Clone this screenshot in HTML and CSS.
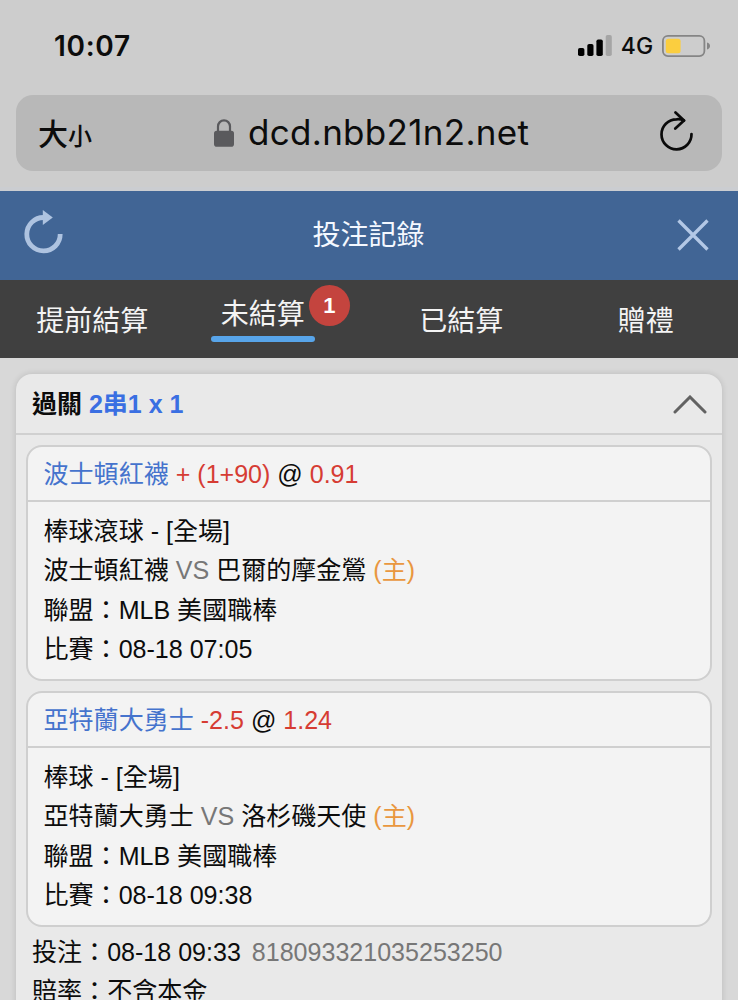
FILE: index.html
```html
<!DOCTYPE html>
<html lang="zh-Hant">
<head>
  <meta charset="UTF-8">
  <title>投注記錄</title>
  <link rel="stylesheet" href="styles.css">
</head>
<body>

<div class="browser">
  <div class="status-bar">
    <span class="time">10:07</span>
    <div class="status-icons">
      <svg width="34" height="22" viewBox="0 0 34 22">
        <rect x="0" y="13" width="6.4" height="8" rx="1.8"/>
        <rect x="9.3" y="9" width="6.2" height="12" rx="1.8"/>
        <rect x="18.4" y="4.5" width="6.4" height="16.5" rx="1.8"/>
        <rect x="27.7" y="0" width="6.1" height="21" rx="1.8" fill="#a5a5a5"/>
      </svg>
      <span class="network">4G</span>
      <svg width="49" height="22" viewBox="0 0 49 22">
        <rect x="0.9" y="0.9" width="41.5" height="20.2" rx="5" fill="none" stroke="#858585" stroke-width="1.8"/>
        <rect x="3.8" y="3.8" width="14.8" height="14.4" rx="2.5" fill="#fbce3f"/>
        <path d="M45 7.5c2 .6 3 1.9 3 3.5s-1 2.9-3 3.5z" fill="#858585"/>
      </svg>
    </div>
  </div>
  <div class="address-bar">
    <div class="text-size"><span class="big">大</span><span class="small">小</span></div>
    <div class="url">
      <svg width="20" height="28" viewBox="0 0 20 28">
        <path d="M4 13V7.5a6 6.2 0 0 1 12 0V13" fill="none" stroke="#5a5a5d" stroke-width="2.2"/>
        <rect x="0" y="11.7" width="20" height="16" rx="2.8" fill="#5a5a5d"/>
      </svg>
      <span>dcd.nbb21n2.net</span>
    </div>
    <svg class="reload" width="34" height="40" viewBox="0 0 34 40" fill="none" stroke="#0a0a0a" stroke-width="2.7" stroke-linecap="round" stroke-linejoin="round">
      <path d="M31.5 23A15 15 0 1 1 16.5 8.3Q20 7.8 24 9.5"/>
      <path d="M15.5 1.500l8.500 8-8.700 8"/>
    </svg>
  </div>
</div>

<div class="page-header">
  <svg class="refresh" width="40" height="44" viewBox="0 0 40 44">
    <path d="M36.2 24A16.7 16.7 0 1 1 20 7.500" fill="none" stroke="#aec3e0" stroke-width="4.8"/>
    <path d="M18.8 0v15l10-7.500z" fill="#aec3e0"/>
  </svg>
  <h1>投注記錄</h1>
  <svg width="34" height="34" viewBox="0 0 34 34">
    <path d="M2.5 2.5l29 29M31.5 2.5l-29 29" stroke="#b3c8e6" stroke-width="3.300"/>
  </svg>
</div>

<div class="tabs">
  <div class="tab">提前結算</div>
  <div class="tab active"><span class="tab-label">未結算<span class="badge">1</span></span></div>
  <div class="tab">已結算</div>
  <div class="tab">贈禮</div>
</div>

<div class="card">
  <div class="card-header">
    <span>過關 <span class="combo">2串1 x 1</span></span>
    <svg width="34" height="20" viewBox="0 0 34 20">
      <path d="M2 17L17 2l15 15" fill="none" stroke="#626262" stroke-width="3" stroke-linecap="round"/>
    </svg>
  </div>

  <div class="bets">
    <div class="bet">
      <div class="bet-title"><span class="team">波士頓紅襪</span> <span class="odds">+ (1+90)</span> @ <span class="odds">0.91</span></div>
      <div class="bet-body">
        <div>棒球滾球 - [全場]</div>
        <div>波士頓紅襪 <span class="vs">VS</span> 巴爾的摩金鶯 <span class="home">(主)</span></div>
        <div>聯盟：MLB 美國職棒</div>
        <div>比賽：08-18 07:05</div>
      </div>
    </div>

    <div class="bet">
      <div class="bet-title"><span class="team">亞特蘭大勇士</span> <span class="odds">-2.5</span> @ <span class="odds">1.24</span></div>
      <div class="bet-body">
        <div>棒球 - [全場]</div>
        <div>亞特蘭大勇士 <span class="vs">VS</span> 洛杉磯天使 <span class="home">(主)</span></div>
        <div>聯盟：MLB 美國職棒</div>
        <div>比賽：08-18 09:38</div>
      </div>
    </div>
  </div>

  <div class="summary">
    <div>投注：08-18 09:33 <span class="bet-id">818093321035253250</span></div>
    <div>賠率：不含本金</div>
  </div>
</div>

</body>
</html>
```

FILE: styles.css
```css
* {
  box-sizing: border-box;
}

body {
  margin: 0;
  height: 1000px;
  overflow: hidden;
  background: #d8d8d8;
  color: #0c0c0c;
  font-family: "Liberation Sans", "Noto Sans CJK TC", sans-serif;
  font-size: 25.06px;
  line-height: 39.25px;
}

svg {
  display: block;
  flex: none;
}

.browser {
  height: 190.5px;
  padding: 0 16px;
  background: #cdcdcd;
  border-bottom: 4px solid #cbcdd1;
  font-family: Inter, "Noto Sans CJK TC", sans-serif;
}

.status-bar {
  display: flex;
  justify-content: space-between;
  height: 95px;
  padding: 27px 11px 0 38px;
}

.time {
  font-size: 28px;
  font-weight: 600;
  letter-spacing: 0.7px;
}

.status-icons {
  display: flex;
  align-items: center;
  height: 38px;
}

.network {
  width: 50px;
  padding-top: 1px;
  text-align: center;
  font-size: 23px;
  font-weight: 500;
}

.address-bar {
  display: flex;
  align-items: center;
  height: 76px;
  padding: 0 28px 0 22px;
  border-radius: 17px;
  background: #b8b8b8;
}

.text-size {
  width: 176px;
  padding-top: 6px;
  font-weight: 500;
  white-space: nowrap;
}

.text-size .big {
  font-size: 30px;
}

.text-size .small {
  font-size: 24px;
}

.url {
  flex: 1;
  display: flex;
  align-items: center;
  gap: 14px;
  font-size: 35px;
  letter-spacing: 0.3px;
}

.reload {
  margin-bottom: 4px;
}

.page-header {
  display: flex;
  justify-content: space-between;
  align-items: center;
  height: 89px;
  padding: 0 28px 0 24px;
  background: #416595;
  color: #f4f8ff;
}

.refresh {
  margin-bottom: 6px;
}

.page-header h1 {
  margin: 0;
  padding: 2px 3px 0 0;
  font-size: 28px;
  font-weight: 400;
}

.tabs {
  display: grid;
  grid-template-columns: repeat(4, 1fr);
  height: 78.5px;
  padding-top: 4px;
  background: #404040;
  color: #f4f4f4;
  font-size: 28px;
}

.tab {
  display: flex;
  justify-content: center;
  align-items: center;
  padding-top: 1px;
}

.tab.active {
  align-items: flex-start;
  padding-right: 28px;
}

.tab-label {
  position: relative;
  width: 104px;
  height: 57px;
  padding-top: 10px;
  text-align: center;
}

.tab-label::after {
  content: "";
  position: absolute;
  left: 0;
  bottom: 0;
  width: 100%;
  height: 6px;
  border-radius: 3px;
  background: #58a5ea;
}

.badge {
  position: absolute;
  top: 0;
  right: -35px;
  width: 41px;
  height: 41px;
  border-radius: 50%;
  background: #c4443e;
  color: #fff;
  font-size: 22px;
  font-weight: bold;
  line-height: 41px;
}

.card {
  margin: 16px 16px 0;
  height: 680px;
  border-radius: 16px 16px 0 0;
  background: #e9e9e9;
  box-shadow: 0 0 6px rgba(0, 0, 0, 0.14);
}

.card-header {
  display: flex;
  justify-content: space-between;
  align-items: center;
  height: 61px;
  padding: 2px 15px 0 16px;
  border-bottom: 2px solid #d0d0d0;
  font-size: 25px;
  font-weight: bold;
}

.combo {
  color: #3a6fe2;
}

.bets {
  display: flex;
  flex-direction: column;
  gap: 10px;
  padding: 10px 10px 0;
}

.bet {
  height: 236px;
  border: 2px solid #cfcfcf;
  border-radius: 16px;
  background: #f3f3f3;
}

.bet-title {
  height: 55px;
  padding: 8px 15.5px 0;
  border-bottom: 2px solid #cfcfcf;
}

.bet-body {
  padding: 10px 15.5px 0;
}

.team {
  color: #4573cd;
}

.odds {
  color: #d63c33;
}

.vs {
  color: #777;
}

.home {
  color: #e9973f;
}

.summary {
  padding: 6px 16px 0;
}

.bet-id {
  margin-left: 4px;
  color: #777;
}
```
